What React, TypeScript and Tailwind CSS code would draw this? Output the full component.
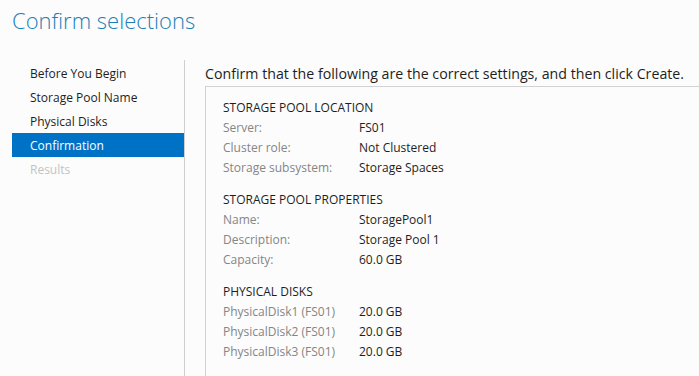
import React from 'react';

const steps = [
  { label: 'Before You Begin', state: 'done' },
  { label: 'Storage Pool Name', state: 'done' },
  { label: 'Physical Disks', state: 'done' },
  { label: 'Confirmation', state: 'active' },
  { label: 'Results', state: 'disabled' },
];

const sections = [
  {
    title: 'STORAGE POOL LOCATION',
    rows: [
      ['Server:', 'FS01'],
      ['Cluster role:', 'Not Clustered'],
      ['Storage subsystem:', 'Storage Spaces'],
    ],
  },
  {
    title: 'STORAGE POOL PROPERTIES',
    rows: [
      ['Name:', 'StoragePool1'],
      ['Description:', 'Storage Pool 1'],
      ['Capacity:', '60.0 GB'],
    ],
  },
  {
    title: 'PHYSICAL DISKS',
    rows: [
      ['PhysicalDisk1 (FS01)', '20.0 GB'],
      ['PhysicalDisk2 (FS01)', '20.0 GB'],
      ['PhysicalDisk3 (FS01)', '20.0 GB'],
    ],
  },
];

export default function App() {
  return (
    <div className="w-[699px] h-[376px] overflow-hidden bg-[#fcfcfc] font-['Open_Sans',sans-serif] text-[12px] text-[#1e1e1e]">
      {/* Titre */}
      <h1 className="pl-3 pt-[3px] h-[60px] text-[22px] leading-[34px] font-light text-[#1a80b6]">
        Confirm selections
      </h1>

      <div className="flex">
        {/* Étapes */}
        <nav className="ml-3 w-[172px] pt-px">
          {steps.map(s => (
            <div
              key={s.label}
              className={
                s.state === 'active'
                  ? 'h-6 leading-[25px] pl-[18px] bg-[#0072c6] text-white'
                  : s.state === 'disabled'
                  ? 'h-6 leading-[25px] pl-[18px] text-[#c3c3c3]'
                  : 'h-6 leading-[25px] pl-[18px]'
              }
            >
              {s.label}
            </div>
          ))}
        </nav>

        <div className="w-px h-[316px] bg-[#cfcfcf]" />

        {/* Contenu */}
        <div className="flex-1 pl-5">
          <p className="h-[26px] pt-[4px] text-[14.2px] leading-5">
            Confirm that the following are the correct settings, and then click Create.
          </p>
          <div className="border-l border-t border-[#d2d2d2] h-[300px] pl-[17px] pt-[11px]">
            {sections.map(sec => (
              <div key={sec.title} className="mb-3">
                <div className="h-5 leading-5">{sec.title}</div>
                {sec.rows.map(([label, value]) => (
                  <div key={label} className="flex h-5 leading-5">
                    <span className="w-[136px] text-[#858585]">{label}</span>
                    <span>{value}</span>
                  </div>
                ))}
              </div>
            ))}
          </div>
        </div>
      </div>
    </div>
  );
}
